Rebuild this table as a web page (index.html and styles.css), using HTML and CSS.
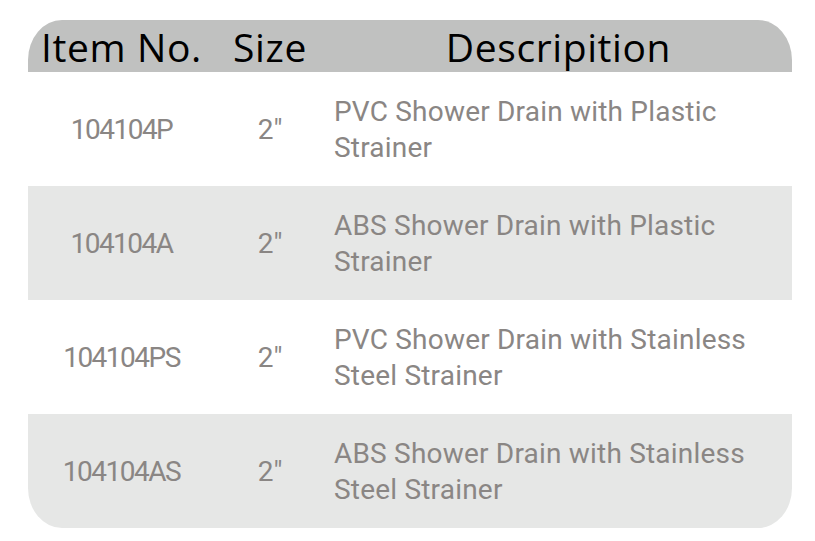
FILE: index.html
```html
<!DOCTYPE html>
<html>
<head>
<meta charset="utf-8">
<link rel="stylesheet" href="styles.css">
</head>
<body>
<div class="table">
  <div class="row head">
    <div class="c1">Item No.</div>
    <div class="c2">Size</div>
    <div class="c3">Descripition</div>
  </div>
  <div class="row">
    <div class="c1">104104P</div>
    <div class="c2">2"</div>
    <div class="c3 desc">PVC Shower Drain with Plastic<br>Strainer</div>
  </div>
  <div class="row alt">
    <div class="c1">104104A</div>
    <div class="c2">2"</div>
    <div class="c3 desc">ABS Shower Drain with Plastic<br>Strainer</div>
  </div>
  <div class="row">
    <div class="c1">104104PS</div>
    <div class="c2">2"</div>
    <div class="c3 desc">PVC Shower Drain with Stainless<br>Steel Strainer</div>
  </div>
  <div class="row alt last">
    <div class="c1">104104AS</div>
    <div class="c2">2"</div>
    <div class="c3 desc">ABS Shower Drain with Stainless<br>Steel Strainer</div>
  </div>
</div>
</body>
</html>
```
FILE: styles.css
```css
html, body {
  margin: 0;
  padding: 0;
  background: #ffffff;
}
body {
  padding: 20px 0 0 28px;
}
.table {
  width: 764px;
  display: flex;
  flex-direction: column;
  font-family: Roboto, "Liberation Sans", sans-serif;
  color: #8a8684;
}
.row {
  display: grid;
  grid-template-columns: 187px 110px 1fr;
  align-items: center;
  height: 114px;
  font-size: 28px;
}
.row.alt {
  background: #e6e7e6;
}
.row.last {
  border-radius: 0 0 34px 34px / 0 0 40px 40px;
}
.row.head {
  height: 52px;
  background: #c0c1c0;
  border-radius: 34px 34px 0 0 / 40px 40px 0 0;
  color: #000000;
  font-family: "Open Sans", "Noto Sans", sans-serif;
  font-size: 39px;
  letter-spacing: 0.6px;
}
.c1, .c2 {
  text-align: center;
}
.c1 {
  letter-spacing: -1.5px;
}
.head .c1 {
  letter-spacing: 0.6px;
}
.head .c3 {
  text-align: center;
}
.desc {
  padding-left: 9px;
  padding-top: 2px;
  line-height: 36px;
  letter-spacing: 0.2px;
}
```
